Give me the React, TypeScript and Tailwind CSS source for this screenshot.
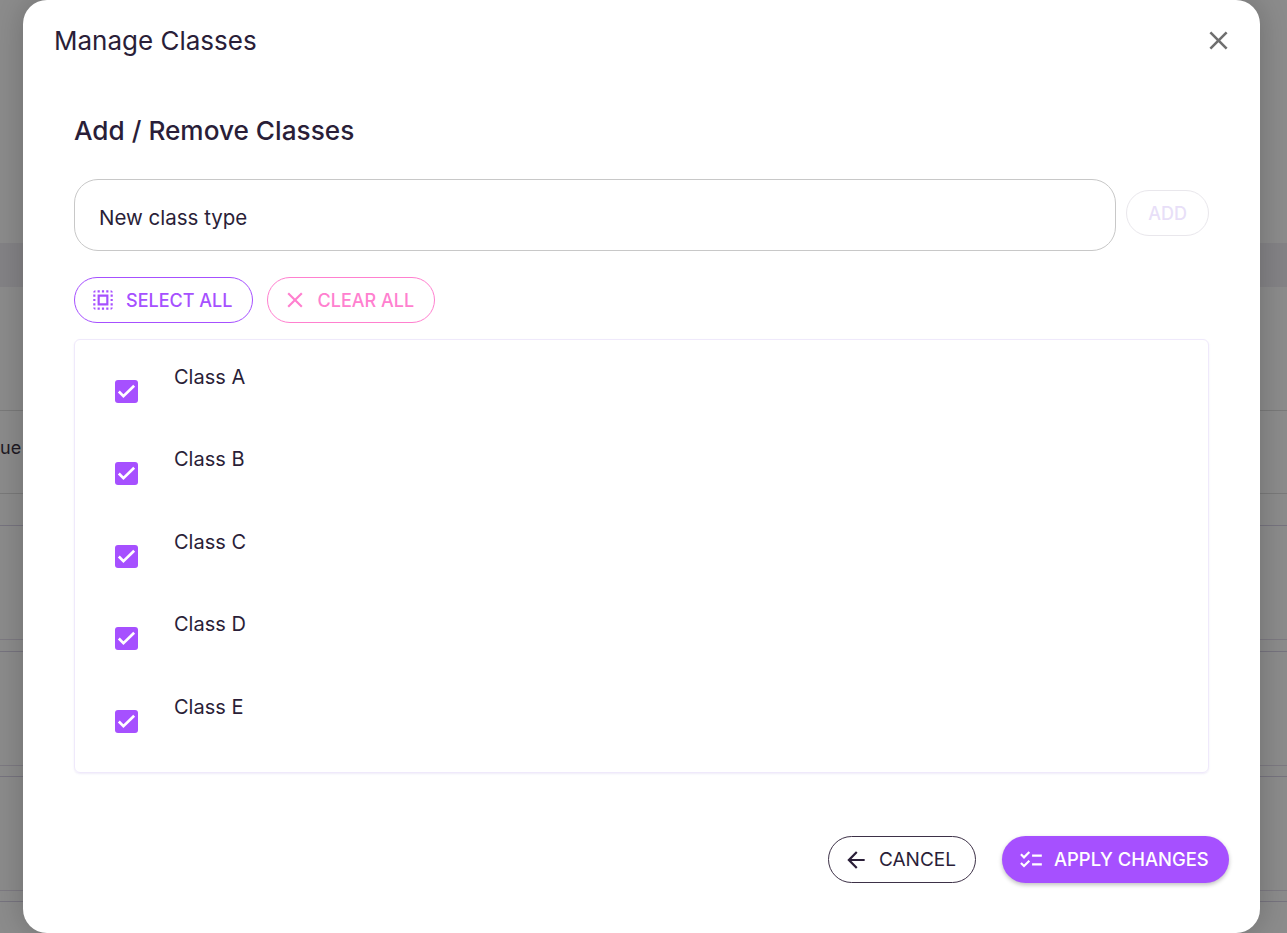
const classes = ['Class A', 'Class B', 'Class C', 'Class D', 'Class E'];

function SelectAllIcon({ className }: { className?: string }) {
  return (
    <svg viewBox="0 0 24 24" fill="currentColor" className={className}>
      <path d="M3 5h2V3c-1.1 0-2 .9-2 2zm0 8h2v-2H3v2zm4 8h2v-2H7v2zM3 9h2V7H3v2zm10-6h-2v2h2V3zm6 0v2h2c0-1.1-.9-2-2-2zM5 21v-2H3c0 1.1.9 2 2 2zm-2-4h2v-2H3v2zM9 3H7v2h2V3zm2 18h2v-2h-2v2zm8-8h2v-2h-2v2zm0 8c1.1 0 2-.9 2-2h-2v2zm0-12h2V7h-2v2zm0 8h2v-2h-2v2zm-4 4h2v-2h-2v2zm0-16h2V3h-2v2zM7 17h10V7H7v10zm2-8h6v6H9V9z" />
    </svg>
  );
}

function ChecklistIcon({ className }: { className?: string }) {
  return (
    <svg viewBox="0 0 24 24" fill="currentColor" className={className}>
      <path d="M22 7h-9v2h9V7zm0 8h-9v2h9v-2zM5.54 11 2 7.46l1.41-1.41 2.12 2.12 4.24-4.24 1.41 1.41L5.54 11zm0 8L2 15.46l1.41-1.41 2.12 2.12 4.24-4.24 1.41 1.41L5.54 19z" />
    </svg>
  );
}

function CloseIcon({ className }: { className?: string }) {
  return (
    <svg viewBox="0 0 24 24" fill="currentColor" className={className}>
      <path d="M19 6.41 17.59 5 12 10.59 6.41 5 5 6.41 10.59 12 5 17.59 6.41 19 12 13.41 17.59 19 19 17.59 13.41 12z" />
    </svg>
  );
}

function ArrowBackIcon({ className }: { className?: string }) {
  return (
    <svg viewBox="0 0 24 24" fill="currentColor" className={className}>
      <path d="M20 11H7.83l5.59-5.59L12 4l-8 8 8 8 1.41-1.41L7.83 13H20v-2z" />
    </svg>
  );
}

function CheckedBox() {
  return (
    <span className="flex h-[23px] w-[23px] shrink-0 items-center justify-center rounded-[3px] bg-[#a650ff]">
      <svg viewBox="0 0 24 24" fill="none" stroke="white" strokeWidth="2.8" className="h-[23px] w-[23px]">
        <path d="M4 12l4.8 4.8L20 6" />
      </svg>
    </span>
  );
}

function Backdrop() {
  return (
    <div className="flex h-[933px] flex-col">
      <div className="h-[243px] shrink-0" />
      <div className="h-[44px] shrink-0 bg-[#848386]" />
      <div className="h-[124px] shrink-0 border-b border-[#7a7a7a]" />
      <div className="flex h-[83px] shrink-0 items-center border-b border-[#7a7a7a] pb-[9px] text-[18px] text-[#1f1a24]">ue</div>
      <div className="h-[32px] shrink-0 border-b border-[#77747f]" />
      <div className="h-[114px] shrink-0 border-b border-[#7d7a82]" />
      <div className="h-[12px] shrink-0 border-b border-[#77747f]" />
      <div className="h-[114px] shrink-0 border-b border-[#7d7a82]" />
      <div className="h-[11px] shrink-0 border-b border-[#77747f]" />
      <div className="h-[114px] shrink-0 border-b border-[#7d7a82]" />
      <div className="h-[11px] shrink-0 border-b border-[#77747f]" />
    </div>
  );
}

export default function App() {
  return (
    <div className="relative h-[933px] overflow-hidden bg-[#8c8c8c] font-['Inter',sans-serif] text-[#2a1e38]">
      <Backdrop />
      <div className="absolute inset-y-0 left-[23px] flex w-[1237px] flex-col rounded-[24px] bg-white shadow-[0_0_32px_rgba(0,0,0,0.22)]">
        <div className="flex h-[80px] shrink-0 items-center justify-between pl-[31px] pr-[26px]">
          <h1 className="text-[26px] font-normal">Manage Classes</h1>
          <CloseIcon className="h-[31px] w-[31px] text-[#6f6f6f]" />
        </div>

        <div className="flex flex-1 flex-col pl-[51px] pr-[51px]">
          <h2 className="mt-[33px] text-[26.2px] font-medium leading-[36px]">Add / Remove Classes</h2>

          <div className="mt-[30px] flex items-start gap-[10px]">
            <div className="flex h-[72px] flex-1 items-center rounded-[24px] border border-[#c8c8c8] px-[24px] pt-[6px] text-[20.5px]">
              New class type
            </div>
            <button className="mt-[11px] flex h-[46px] w-[83px] items-center justify-center rounded-[23px] border border-[#e9e7ec] text-[18px] font-medium text-[#e8dff8]">
              ADD
            </button>
          </div>

          <div className="mt-[26px] flex gap-[14px]">
            <button className="flex h-[46px] w-[178.5px] items-center gap-[10px] rounded-[23px] border border-[#a650ff] pl-[15px] text-[18px] font-medium text-[#a650ff]">
              <SelectAllIcon className="h-[26px] w-[26px]" />
              <span className="pt-[1px]">SELECT ALL</span>
            </button>
            <button className="flex h-[46px] w-[168.5px] items-center gap-[10px] rounded-[23px] border border-[#ff80cf] pl-[14px] text-[18px] font-medium text-[#ff80cf]">
              <CloseIcon className="h-[26px] w-[26px]" />
              <span className="pt-[1px]">CLEAR ALL</span>
            </button>
          </div>

          <ul className="mt-[16px] h-[434px] rounded-[6px] border border-[#efe9fb] py-[10px] shadow-[0_1px_2px_rgba(120,100,200,0.12)]">
            {classes.map((name) => (
              <li key={name} className="flex h-[82.5px] pl-[40px]">
                <div className="mt-[29.5px]">
                  <CheckedBox />
                </div>
                <span className="ml-[36px] mt-[13.5px] text-[20px] leading-[26px]">{name}</span>
              </li>
            ))}
          </ul>

          <div className="mt-[63px] flex justify-end gap-[26px]">
            <button className="flex h-[47px] w-[148px] items-center gap-[10px] rounded-[24px] border border-[#3d3147] pl-[14px] text-[19px]">
              <ArrowBackIcon className="h-[26px] w-[26px]" />
              <span className="pt-[1px]">CANCEL</span>
            </button>
            <button className="-mr-[20px] flex h-[47px] w-[227px] items-center gap-[10px] rounded-[24px] bg-[#a650ff] pl-[16px] text-[18.4px] font-medium text-white shadow-[0_2px_4px_rgba(0,0,0,0.25)]">
              <ChecklistIcon className="h-[26px] w-[26px]" />
              APPLY CHANGES
            </button>
          </div>
        </div>
      </div>
    </div>
  );
}
